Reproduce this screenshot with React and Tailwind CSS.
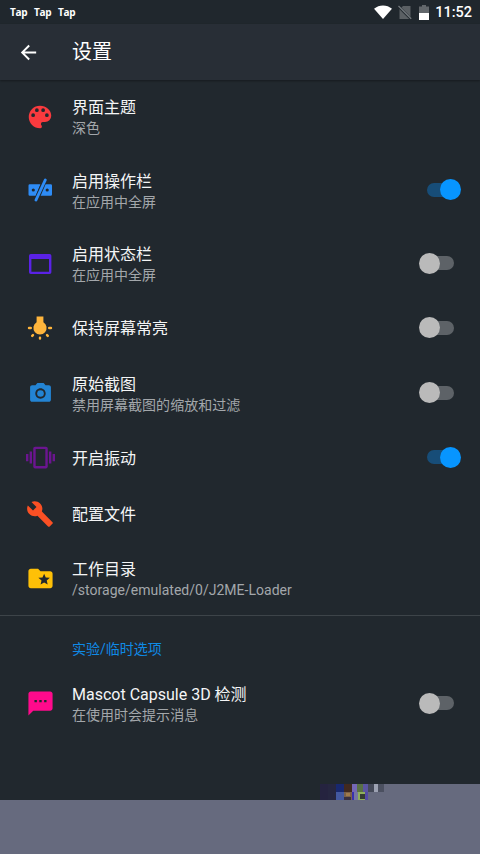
import React from 'react';
import {
  MdArrowBack,
  MdBuild,
  MdFolderSpecial,
  MdPhotoCamera,
  MdTextsms,
  MdVibration
} from 'react-icons/md';

function PaletteIcon() {
  return (
    <svg viewBox="0 0 24 24" className="w-[30px] h-[30px]" fill="#f93a3e">
      <path d="M17.5 12A1.5 1.5 0 0 1 16 10.5A1.5 1.5 0 0 1 17.5 9A1.5 1.5 0 0 1 19 10.5A1.5 1.5 0 0 1 17.5 12M14.5 8A1.5 1.5 0 0 1 13 6.5A1.5 1.5 0 0 1 14.5 5A1.5 1.5 0 0 1 16 6.5A1.5 1.5 0 0 1 14.5 8M9.5 8A1.5 1.5 0 0 1 8 6.5A1.5 1.5 0 0 1 9.5 5A1.5 1.5 0 0 1 11 6.5A1.5 1.5 0 0 1 9.5 8M6.5 12A1.5 1.5 0 0 1 5 10.5A1.5 1.5 0 0 1 6.5 9A1.5 1.5 0 0 1 8 10.5A1.5 1.5 0 0 1 6.5 12M12 3A9 9 0 0 0 3 12A9 9 0 0 0 12 21A1.5 1.5 0 0 0 13.5 19.5C13.5 19.11 13.35 18.76 13.11 18.5C12.88 18.23 12.73 17.88 12.73 17.5A1.5 1.5 0 0 1 14.23 16H16A5 5 0 0 0 21 11C21 6.58 16.97 3 12 3Z" />
    </svg>
  );
}

function ActionBarIcon() {
  return (
    <svg viewBox="0 0 30 30" className="w-[30px] h-[30px]" fill="#2e8cf6">
      <path
        fillRule="evenodd"
        d="M4.8 9.3H15.5L10.7 20.7H4.8A1.3 1.3 0 0 1 3.5 19.4V10.6A1.3 1.3 0 0 1 4.8 9.3ZM8.3 13.4A1.6 1.6 0 1 0 8.3 16.6A1.6 1.6 0 1 0 8.3 13.4Z"
      />
      <path
        fillRule="evenodd"
        d="M19.6 9.3H25.7A1.3 1.3 0 0 1 27 10.6V19.4A1.3 1.3 0 0 1 25.7 20.7H14.8ZM22.2 13.4A1.6 1.6 0 1 0 22.2 16.6A1.6 1.6 0 1 0 22.2 13.4Z"
      />
      <path d="M20.3 4.2L11 25.8" stroke="#21282e" strokeWidth="4.6" />
      <path d="M20.3 5L11 25" stroke="#2e8cf6" strokeWidth="2.9" strokeLinecap="round" />
    </svg>
  );
}

function StatusBarIcon() {
  return (
    <svg viewBox="0 0 30 30" className="w-[30px] h-[30px]" fill="#5a22e6">
      <path
        fillRule="evenodd"
        d="M5.8 5H24.6A1.8 1.8 0 0 1 26.4 6.8V23.2A1.8 1.8 0 0 1 24.6 25H5.8A1.8 1.8 0 0 1 4 23.2V6.8A1.8 1.8 0 0 1 5.8 5ZM6.4 10V22.7H24V10Z"
      />
    </svg>
  );
}

function LampIcon() {
  return (
    <svg viewBox="0 0 30 30" className="w-[30px] h-[30px]" fill="#ffb53c">
      <path d="M11.6 3.5H18.4V9.2A6.6 6.6 0 1 1 11.6 9.2Z" />
      <path
        d="M4 15H5.8M24.2 15H26M7.2 22.9L8 22.1M22.8 22.9L22 22.1M15 24.6V25.6"
        stroke="#ffb53c"
        strokeWidth="2.4"
        strokeLinecap="round"
      />
    </svg>
  );
}

const generalItems = [
  { title: '界面主题', summary: '深色', icon: <PaletteIcon /> },
  { title: '启用操作栏', summary: '在应用中全屏', icon: <ActionBarIcon />, checked: true },
  { title: '启用状态栏', summary: '在应用中全屏', icon: <StatusBarIcon />, checked: false },
  { title: '保持屏幕常亮', icon: <LampIcon />, checked: false },
  {
    title: '原始截图',
    summary: '禁用屏幕截图的缩放和过滤',
    icon: <MdPhotoCamera className="w-[25px] h-[25px] text-[#2384d4]" />,
    checked: false
  },
  {
    title: '开启振动',
    icon: <MdVibration className="w-[29px] h-[29px] text-[#6b1590]" />,
    checked: true
  },
  { title: '配置文件', icon: <MdBuild className="w-7 h-7 text-[#fb5024]" /> },
  {
    title: '工作目录',
    summary: '/storage/emulated/0/J2ME-Loader',
    icon: <MdFolderSpecial className="w-[29px] h-[29px] text-[#fec007]" />
  }
];

const experimentalItem = {
  title: 'Mascot Capsule 3D 检测',
  summary: '在使用时会提示消息',
  icon: <MdTextsms className="w-[29px] h-[29px] text-[#ff0a8c]" />,
  checked: false
};

function Toggle({ checked }) {
  return (
    <div
      role="switch"
      aria-checked={checked}
      className={`flex items-center w-[27px] h-[14px] rounded-full ${
        checked ? 'justify-end bg-[#174d78]' : 'justify-start bg-[#5d6267]'
      }`}
    >
      <div
        className={`w-[21px] h-[21px] shrink-0 rounded-full ${
          checked ? '-mr-[7px] bg-[#0795ff]' : '-ml-[8px] bg-[#bababa]'
        }`}
      />
    </div>
  );
}

function PreferenceRow({ item }) {
  const { title, summary, icon, checked } = item;

  return (
    <div className={`flex items-center pr-[26px] ${summary ? 'h-[73.4px]' : 'h-14'}`}>
      <div className="w-[72px] pl-[25px] pb-[2px] shrink-0">
        <div className="w-[30px] flex justify-center">{icon}</div>
      </div>
      <div className="flex-grow">
        <div className="text-base leading-[22px] text-[#f4f5f6]">{title}</div>
        {summary && (
          <div className="text-sm leading-[19px] tracking-[0.02px] text-[#a3a7ab]">{summary}</div>
        )}
      </div>
      {checked !== undefined && (
        <div className="pb-[3px]">
          <Toggle checked={checked} />
        </div>
      )}
    </div>
  );
}

function SystemBar() {
  return (
    <div className="flex items-center justify-between h-6 shrink-0 pl-[10px] pr-2 bg-[#20272d] text-white">
      <div className="flex gap-[6px] pb-[1px] text-[10px] leading-none font-bold tracking-[-0.3px] font-['Open_Sans',sans-serif]">
        <span className="w-[18px]">Tap</span>
        <span className="w-[18px]">Tap</span>
        <span className="w-[18px]">Tap</span>
      </div>
      <div className="flex items-center">
        <svg viewBox="0 0 18 14" className="w-[18px] h-[14px]" fill="#fff">
          <path d="M0 3.8C5 -0.7 13 -0.7 18 3.8L9 14Z" />
        </svg>
        <svg viewBox="0 0 14 15" className="w-[14px] h-[15px] ml-[6px]">
          <path d="M5 1H12.5V14H1.5V4.5Z" fill="#5b6064" />
          <path d="M0 1L13.5 14.5" stroke="#20272d" strokeWidth="2.6" />
          <path d="M0.5 1L13.2 13.7" stroke="#747a7e" strokeWidth="1.3" />
        </svg>
        <svg viewBox="0 0 10 15" className="w-[10px] h-[15px] ml-[7px]">
          <path d="M3 0H7V1.5H10V8H0V1.5H3Z" fill="#62676b" />
          <path d="M0 8H10V15H0Z" fill="#fff" />
        </svg>
        <span className="ml-[6px] pt-[2px] text-[14.5px] leading-[22px] font-medium">11:52</span>
      </div>
    </div>
  );
}

// Garbled strip left behind by the video buffer at the bottom of the screen
function BufferStrip() {
  return (
    <div className="h-[70px] shrink-0">
      <div className="flex h-4">
        <div className="w-80" />
        <div className="w-2 bg-[#25233f]" />
        <div className="w-2 bg-[#262640]" />
        <svg viewBox="0 0 48 16" className="w-12 h-4">
          <rect width="48" height="16" fill="#666a7e" />
          <rect width="8" height="8" fill="#18286f" />
          <rect y="8" width="8" height="8" fill="#4358a0" />
          <rect x="8" width="8" height="8" fill="#41291f" />
          <rect x="8" y="8" width="8" height="8" fill="#7b6049" />
          <rect x="10" y="9" width="4" height="3" fill="#a07a4c" />
          <rect x="8" y="13" width="7" height="3" fill="#3a3040" />
          <rect x="16" width="5" height="8" fill="#7467b5" />
          <rect x="21" width="6" height="8" fill="#587044" />
          <rect x="27" width="5" height="8" fill="#5a54a0" />
          <rect x="16" y="8" width="2" height="8" fill="#3930b0" />
          <rect x="18" y="8" width="4" height="8" fill="#7776a0" />
          <rect x="22" y="8" width="7" height="8" fill="#8fae5c" />
          <rect x="24" y="10" width="5" height="5" fill="#343c32" />
          <rect x="29" y="8" width="3" height="8" fill="#5349a5" />
          <rect x="32" width="6" height="8" fill="#444958" />
          <rect x="38" width="4" height="8" fill="#9ca1b2" />
          <rect x="42" width="6" height="8" fill="#4b5060" />
        </svg>
        <div className="flex-grow bg-[#666a7e]" />
      </div>
      <div className="h-[54px] bg-[#666a7e]" />
    </div>
  );
}

export default function App() {
  return (
    <div className="flex flex-col w-[480px] h-[854px] overflow-hidden bg-[#21282e] font-[Roboto,'Noto_Sans_CJK_SC',sans-serif]">
      <SystemBar />
      <header className="flex items-center h-14 shrink-0 bg-[#282e36] text-white shadow-[0_1px_2px_rgba(0,0,0,0.35)]">
        <div className="w-[72px] pl-[17px]">
          <MdArrowBack className="w-[23px] h-[23px]" />
        </div>
        <h1 className="text-xl">设置</h1>
      </header>

      <main className="flex-grow pt-[1.3px]">
        {generalItems.map((item) => (
          <PreferenceRow key={item.title} item={item} />
        ))}
        <section className="-mt-[1.3px] border-t border-[#3d4449] pt-[23px]">
          <h2 className="pl-[72px] pb-[9px] text-sm leading-5 text-[#0f8ae6]">实验/临时选项</h2>
          <PreferenceRow item={experimentalItem} />
        </section>
      </main>

      <BufferStrip />
    </div>
  );
}
